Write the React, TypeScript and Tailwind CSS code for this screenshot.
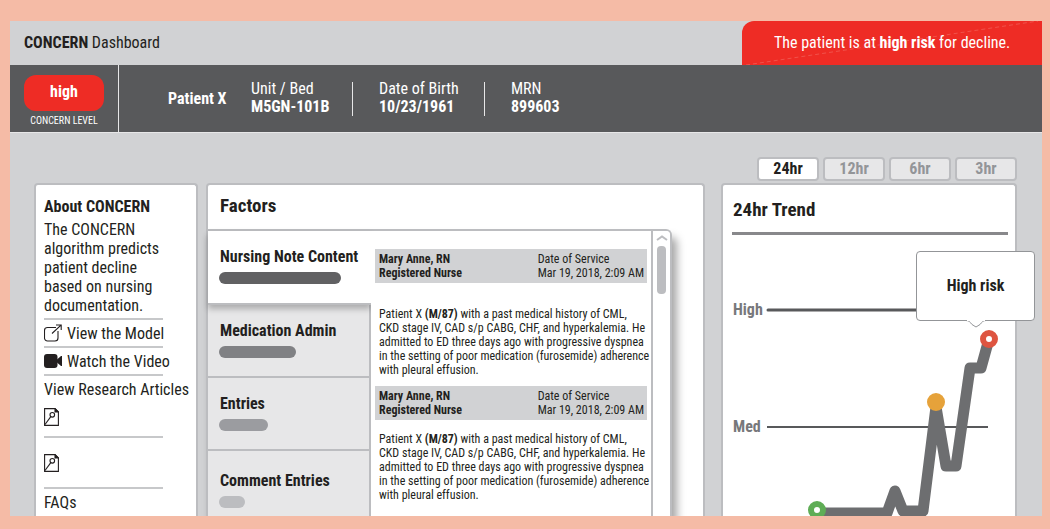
import type { ReactNode } from "react";

interface Factor {
  name: string;
  barClass: string;
}

interface Point {
  x: number;
  y: number;
}

const factors: Factor[] = [
  { name: "Nursing Note Content", barClass: "w-[122px] bg-[#616163]" },
  { name: "Medication Admin", barClass: "w-[77px] bg-[#808184]" },
  { name: "Entries", barClass: "w-[49px] bg-[#9b9ca0]" },
  { name: "Comment Entries", barClass: "w-[26px] bg-[#bcbdc0]" },
];

const ranges = ["24hr", "12hr", "6hr", "3hr"];

const noteLines = [
  "CKD stage IV, CAD s/p CABG, CHF, and hyperkalemia. He",
  "admitted to ED three days ago with progressive dyspnea",
  "in the setting of poor medication (furosemide) adherence",
  "with pleural effusion.",
];

const trend: Point[] = [
  { x: 94, y: 278 },
  { x: 164, y: 278 },
  { x: 172, y: 256 },
  { x: 180, y: 276 },
  { x: 200, y: 276 },
  { x: 213, y: 172 },
  { x: 223, y: 231 },
  { x: 233, y: 231 },
  { x: 247, y: 133 },
  { x: 258, y: 133 },
  { x: 266, y: 104 },
];

function ExternalIcon() {
  return (
    <svg width="18" height="18" viewBox="0 0 18 18" fill="none" stroke="#231f20" strokeWidth="1.1">
      <path d="M12 3.5H3.5a3 3 0 0 0-3 3V14a3 3 0 0 0 3 3H11a3 3 0 0 0 3-3V7" />
      <path d="M8 9.5 17 1.2M12 1h5.2v5" />
    </svg>
  );
}

function VideoIcon() {
  return (
    <svg width="18" height="14" viewBox="0 0 18 14" fill="#231f20">
      <rect x="0" y="0" width="13.5" height="14" rx="3" />
      <path d="M13 5.5 17 2h1v10h-1l-4-3.500z" />
    </svg>
  );
}

function ArticleIcon() {
  return (
    <svg width="15" height="18" viewBox="0 0 15 18" fill="none" stroke="#231f20" strokeWidth="1.1">
      <path d="M.6.6H11l3.4 3.4v13.4H.6z" />
      <path d="M11 .6V4h3.4z" fill="#231f20" />
      <circle cx="8.3" cy="6.8" r="2.3" />
      <path d="M6.8 8.6 1 16.5" />
    </svg>
  );
}

function Detail({ label, value }: { label: string; value: string }) {
  return (
    <div className="flex h-[34px] flex-col justify-end text-base leading-[18px]">
      <div>{label}</div>
      <div className="font-bold">{value}</div>
    </div>
  );
}

function AboutLink({ children }: { children: ReactNode }) {
  return (
    <a href="#" className="flex h-[26px] items-center gap-[5px] whitespace-nowrap">
      {children}
    </a>
  );
}

function Rule() {
  return <hr className="h-[2px] w-[119px] border-0 bg-[#c7c8ca]" />;
}

function About() {
  return (
    <aside className="mt-[26px] w-[164px] shrink-0 rounded-t border-2 border-b-0 border-[#bcbdc0] bg-white pt-3 pl-2 text-base leading-[19px]">
      <h2 className="mb-1 text-base leading-[19px] font-bold">About CONCERN</h2>
      <p className="mb-[3px]">
        The CONCERN
        <br />
        algorithm predicts
        <br />
        patient decline
        <br />
        based on nursing
        <br />
        documentation.
      </p>
      <Rule />
      <AboutLink>
        <ExternalIcon />
        View the Model
      </AboutLink>
      <Rule />
      <AboutLink>
        <VideoIcon />
        Watch the Video
      </AboutLink>
      <Rule />
      <AboutLink>View Research Articles</AboutLink>
      <a href="#" aria-label="First article" className="mt-[6px] mb-[10px] block w-4">
        <ArticleIcon />
      </a>
      <Rule />
      <a href="#" aria-label="Second article" className="mt-4 mb-[15px] block w-4">
        <ArticleIcon />
      </a>
      <Rule />
      <AboutLink>FAQs</AboutLink>
    </aside>
  );
}

function Note() {
  return (
    <article className="text-xs leading-[14px] whitespace-nowrap">
      <header className="flex h-[34px] items-center justify-between bg-[#d1d2d4] pr-[3px] pl-1">
        <div className="font-bold">
          Mary Anne, RN
          <br />
          Registered Nurse
        </div>
        <div>
          Date of Service
          <br />
          Mar 19, 2018, 2:09 AM
        </div>
      </header>
      <p className="pl-1">
        Patient X <b>(M/87)</b> with a past medical history of CML,
        {noteLines.map((line) => (
          <span key={line} className="block">
            {line}
          </span>
        ))}
      </p>
    </article>
  );
}

function factorClass(index: number) {
  if (index === 0) {
    return "z-10 flex h-[74px] shrink-0 flex-col border-b-2 border-[#bcbdc0] bg-white pt-4 pl-[11px] text-left shadow-[0_4px_6px_rgba(0,0,0,0.25)]";
  }
  if (index === factors.length - 1) {
    return "flex h-20 shrink-0 flex-col border-r-2 border-[#bcbdc0] bg-[#e7e7e8] pt-5 pl-[11px] text-left";
  }
  return "flex h-[73px] shrink-0 flex-col border-r-2 border-b-2 border-[#bcbdc0] bg-[#e7e7e8] pt-4 pl-[11px] text-left";
}

function Factors() {
  return (
    <section className="mt-[26px] ml-2 flex min-w-0 flex-1 flex-col rounded-t border-2 border-b-0 border-[#bcbdc0] bg-white">
      <h2 className="h-11 pl-3 text-[19px] leading-[42px] font-bold">Factors</h2>
      <div className="mr-[31px] -ml-[2px] flex min-h-0 flex-1 rounded-tr-md border-2 border-b-0 border-[#bcbdc0] bg-white shadow-[5px_8px_8px_rgba(0,0,0,0.35)]">
        <nav className="flex w-[163px] shrink-0 flex-col">
          {factors.map((factor, i) => (
            <button key={factor.name} className={factorClass(i)}>
              <span className="block pl-px text-base leading-5 font-bold whitespace-nowrap">
                {factor.name}
              </span>
              <span className={`mt-[5px] block h-3 rounded-md ${factor.barClass}`} />
            </button>
          ))}
        </nav>
        <div className="z-10 flex min-w-0 flex-1 flex-col gap-[9px] bg-white pt-[18px] pr-1 pl-1">
          <div className="[&_p]:mt-6">
            <Note />
          </div>
          <div className="[&_p]:mt-3">
            <Note />
          </div>
        </div>
        <div className="z-10 flex w-[19px] shrink-0 flex-col items-center rounded-tr border-l-2 border-[#bcbdc0] bg-white pt-1">
          <svg width="12" height="6" viewBox="0 0 12 6" fill="none" stroke="#bcbdc0" strokeWidth="2">
            <path d="M1 5 6 1.5 11 5" />
          </svg>
          <div className="mt-[5px] h-12 w-[9px] rounded bg-[#bcbdc0]" />
        </div>
      </div>
    </section>
  );
}

function TrendChart() {
  return (
    <svg width="292" height="281" viewBox="0 0 292 281" className="block">
      <g fill="#77787b" fontSize="16" fontWeight="bold">
        <text x="10" y="80">High</text>
        <text x="10" y="197">Med</text>
      </g>
      <path d="M45 75H265" stroke="#58595b" strokeWidth="3" strokeLinecap="round" />
      <path d="M44 192H265" stroke="#58595b" strokeWidth="2" />
      <polyline
        points={trend.map((p) => `${p.x},${p.y}`).join(" ")}
        fill="none"
        stroke="#6d6e70"
        strokeWidth="11"
        strokeLinejoin="round"
      />
      <circle cx="94" cy="275" r="6" fill="white" stroke="#5fad56" strokeWidth="6" />
      <circle cx="213" cy="167" r="9" fill="#e6a23a" />
      <circle cx="266" cy="104" r="6" fill="white" stroke="#de5440" strokeWidth="6" />
    </svg>
  );
}

function Trend() {
  return (
    <section className="ml-4 flex w-[296px] shrink-0 flex-col">
      <div className="mb-[2px] flex justify-end gap-1">
        {ranges.map((range, i) => (
          <button
            key={range}
            className={
              i === 0
                ? "h-6 w-[62px] rounded border-2 border-[#bcbdc0] bg-white text-base leading-5 font-bold"
                : "h-6 w-[62px] rounded border-2 border-[#bcbdc0] bg-[#e7e7e8] text-base leading-5 font-bold text-[#939598]"
            }
          >
            {range}
          </button>
        ))}
      </div>
      <div className="relative flex-1 rounded-t border-2 border-b-0 border-[#bcbdc0] bg-white">
        <h2 className="pt-[11px] pl-[10px] text-[19px] leading-7 font-bold">24hr Trend</h2>
        <hr className="mt-2 mr-[7px] ml-[9px] h-[3px] border-0 bg-[#88888b]" />
        <TrendChart />
        <div className="absolute top-[66px] -right-[20px] flex h-[70px] w-[119px] items-center justify-center rounded border border-[#939598] bg-white text-base font-bold">
          High risk
          <svg width="20" height="8" viewBox="0 0 20 8" className="absolute top-full left-[49px]">
            <path d="M0 .5C3 .5 4 2 6 4.500L10 7 14 4.500C16 2 17 .5 20 .5" fill="white" stroke="#939598" />
            <path d="M1 0H19" stroke="white" strokeWidth="2" />
          </svg>
        </div>
      </div>
    </section>
  );
}

export default function App() {
  return (
    <div className="flex h-screen flex-col bg-[#f5bba6] pt-[21px] pr-2 pb-[13px] pl-[10px] font-['Liberation_Sans_Narrow','Roboto_Condensed',Roboto,sans-serif] text-[#231f20]">
      <div className="flex min-h-0 flex-1 flex-col overflow-hidden bg-[#d1d2d4]">
        <header className="flex h-11 shrink-0 items-center justify-between pl-[14px]">
          <h1 className="text-base">
            <b>CONCERN</b> Dashboard
          </h1>
          <div className="relative flex h-full w-[300px] items-center rounded-tl-xl bg-[#ee2c25] pl-8 text-base whitespace-nowrap text-white">
            <svg className="absolute inset-0 h-full w-full" viewBox="0 0 300 44" preserveAspectRatio="none">
              <path d="M4 44 296 0" stroke="#f1524b" strokeDasharray="4 3" />
            </svg>
            <p className="relative">
              The patient is at <b>high risk</b> for decline.
            </p>
          </div>
        </header>
        <div className="flex h-[67px] shrink-0 items-center bg-[#58595b] text-white">
          <div className="flex h-full w-[109px] flex-col items-center border-r border-[#e7e7e8] pt-[10px]">
            <div className="h-9 w-20 rounded-xl bg-[#ee2c25] text-center text-base leading-[34px] font-bold">
              high
            </div>
            <div className="mt-[2px] text-[10px] leading-4">CONCERN LEVEL</div>
          </div>
          <div className="ml-[49px] w-[83px] text-base font-bold">Patient X</div>
          <div className="w-[101px]">
            <Detail label="Unit / Bed" value="M5GN-101B" />
          </div>
          <div className="w-[132px] border-l border-[#e7e7e8] pl-[26px]">
            <Detail label="Date of Birth" value="10/23/1961" />
          </div>
          <div className="border-l border-[#e7e7e8] pl-[26px]">
            <Detail label="MRN" value="899603" />
          </div>
        </div>
        <main className="flex min-h-0 flex-1 border-t border-[#e7e7e8] pt-6 pr-[25px] pl-6">
          <About />
          <Factors />
          <Trend />
        </main>
      </div>
    </div>
  );
}
